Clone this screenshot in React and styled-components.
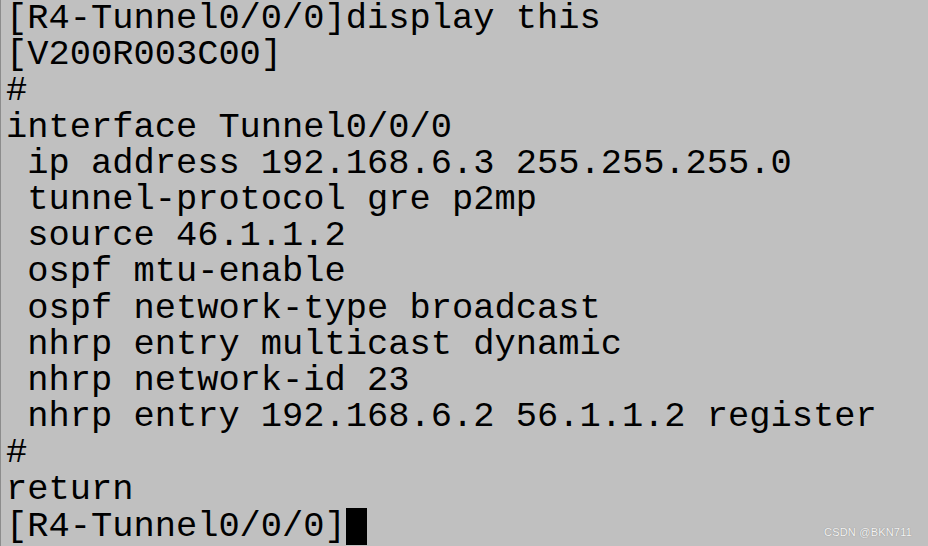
import styled, { createGlobalStyle } from "styled-components";

const GlobalStyle = createGlobalStyle`
  html, body {
    margin: 0;
    padding: 0;
    background: #c0c0c0;
  }
`;

const Screen = styled.div`
  position: relative;
  width: 928px;
  height: 546px;
  overflow: hidden;
  background: #c0c0c0;
  border-left: 1px solid #8c8c8c;
  box-sizing: border-box;
`;

const Output = styled.pre`
  margin: 1px 0 0 0;
  padding: 0 0 0 5px;
  font-family: "Liberation Mono", "DejaVu Sans Mono", monospace;
  font-size: 35.4px;
  line-height: 36.2px;
  color: #000;
  white-space: pre;
`;

const Cursor = styled.span`
  display: inline-block;
  width: 21px;
  height: 37px;
  background: #000;
  vertical-align: -9px;
`;

const Watermark = styled.div`
  position: absolute;
  right: 16px;
  bottom: 8px;
  font-family: "Liberation Sans", Arial, sans-serif;
  font-size: 11px;
  color: #f4f4f4;
  text-shadow: 0 0 1px #777;
  letter-spacing: 0.2px;
`;

const lines = [
  "[R4-Tunnel0/0/0]display this",
  "[V200R003C00]",
  "#",
  "interface Tunnel0/0/0",
  " ip address 192.168.6.3 255.255.255.0",
  " tunnel-protocol gre p2mp",
  " source 46.1.1.2",
  " ospf mtu-enable",
  " ospf network-type broadcast",
  " nhrp entry multicast dynamic",
  " nhrp network-id 23",
  " nhrp entry 192.168.6.2 56.1.1.2 register",
  "#",
  "return",
];

const App = () => {
  return (
    <Screen>
      <GlobalStyle />
      <Output>
        {lines.join("\n")}
        {"\n[R4-Tunnel0/0/0]"}
        <Cursor />
      </Output>
      <Watermark>CSDN @BKN711</Watermark>
    </Screen>
  );
};

export default App;
